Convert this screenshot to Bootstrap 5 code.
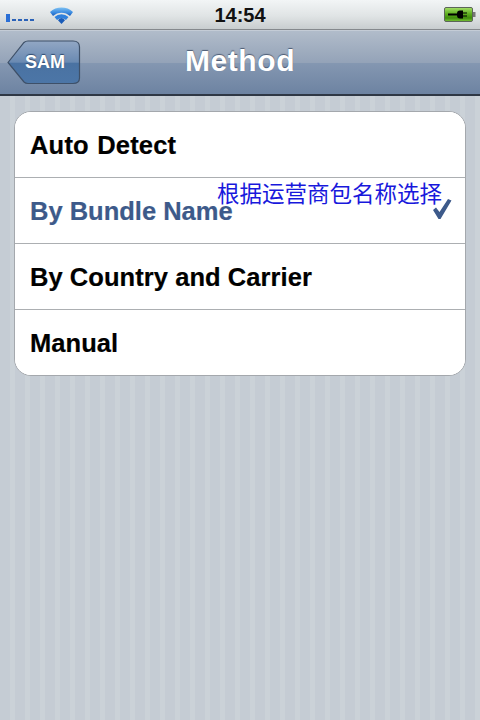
<!DOCTYPE html>
<html lang="en">
<head>
<meta charset="utf-8">
<title>Method</title>
<link href="https://cdn.jsdelivr.net/npm/bootstrap@5.3.0/dist/css/bootstrap.min.css" rel="stylesheet">
<style>
html,body{height:100%;}
body{width:480px;height:720px;overflow:hidden;font-family:"Liberation Sans",Arial,sans-serif;
 background:repeating-linear-gradient(90deg,#c5ccd4 0,#c5ccd4 10.5px,#cbd2d8 10.5px,#cbd2d8 15px);}
.status-strip{height:30px;background:linear-gradient(#f2f5f6,#e0e4e5 55%,#c8cdcf);border-bottom:1px solid #85898d;position:relative;}
.signal-ico{position:absolute;left:5px;top:14px;}
.wifi-ico{position:absolute;left:49px;top:5px;}
.clock-text{position:absolute;left:0;right:0;top:3px;text-align:center;font-size:20px;font-weight:700;color:#111;line-height:24px;}
.batt-ico{position:absolute;left:444px;top:6px;}
.title-bar{height:66px;border-top:1px solid #c4ccd6;border-bottom:2px solid #2f3845;position:relative;
 background:linear-gradient(#b1bcca 0,#94a3b8 50%,#8497b1 51%,#6d83a2 100%);}
.bar-title{position:absolute;left:0;right:0;top:12px;text-align:center;color:#fff;font-size:30px;font-weight:700;letter-spacing:.6px;line-height:36px;text-shadow:0 -1px 1px #4c5b73;}
.back-shape{position:absolute;left:7px;top:9px;}
.back-label{position:absolute;left:25px;top:19px;color:#fff;font-size:18px;font-weight:700;line-height:24px;text-shadow:0 -1px 1px #2e4a70;}
.group-box{margin:15px 14px 0 14px;width:452px;background:#fff;border:1px solid #a4a8ad;border-radius:17px;overflow:hidden;}
.row-item{height:66px;border-bottom:1px solid #acafb2;padding:2px 15px 0;font-size:25.5px;font-weight:700;color:#000;position:relative;background:#fff;letter-spacing:.06px;-webkit-text-stroke:.2px currentColor;}
.row-item:last-child{border-bottom:0;height:65px;}
.row-item.is-picked{color:#3d5a8a;letter-spacing:0;}
.auto-row{word-spacing:1px;letter-spacing:.2px;}
.note-text{position:absolute;left:202px;top:2px;font-family:"Liberation Sans","Noto Sans CJK SC",sans-serif;font-size:22.5px;font-weight:400;color:#1818dc;line-height:30px;white-space:nowrap;-webkit-text-stroke:0;}
.tick-ico{position:absolute;left:416px;top:19px;}
</style>
</head>
<body>
<div class="status-strip">
 <svg class="signal-ico" width="32" height="9" viewBox="0 0 32 9"><rect x="1" y="0" width="4" height="8" fill="#2a6fd6"/><rect x="7" y="5" width="4" height="2" fill="#2a62b8"/><rect x="13" y="5" width="4" height="2" fill="#2a62b8"/><rect x="19" y="5" width="4" height="2" fill="#2a62b8"/><rect x="25" y="5" width="4" height="2" fill="#2a62b8"/></svg>
 <svg class="wifi-ico" width="26" height="19" viewBox="0 0 26 19"><defs><linearGradient id="wf" x1="0" y1="0" x2="0" y2="1"><stop offset="0" stop-color="#7cc0f2"/><stop offset=".6" stop-color="#3a8ae0"/><stop offset="1" stop-color="#1a5cb8"/></linearGradient></defs><path d="M1 7 A17 17 0 0 1 24 7 L21 11 A12.5 12.5 0 0 0 4 11 Z" fill="url(#wf)"/><path d="M5.5 12 A10.5 10.5 0 0 1 19.5 12 L17 15 A6.5 6.5 0 0 0 8 15 Z" fill="#2f80dc"/><path d="M12.5 13 A5.5 5.5 0 0 1 16 15.2 L12.5 19 L9 15.2 A5.5 5.5 0 0 1 12.5 13 Z" fill="#1a5cb8"/></svg>
 <div class="clock-text">14:54</div>
 <svg class="batt-ico" width="32" height="17" viewBox="0 0 32 17"><defs><linearGradient id="bt" x1="0" y1="0" x2="0" y2="1"><stop offset="0" stop-color="#a6e06a"/><stop offset=".45" stop-color="#5fae20"/><stop offset=".75" stop-color="#3f8c0c"/><stop offset="1" stop-color="#7cc63a"/></linearGradient></defs><rect x=".5" y="1.5" width="28" height="14" rx="1.5" fill="url(#bt)" stroke="#5c665a"/><rect x="29" y="6" width="2.5" height="5" fill="#777"/><path d="M4 7.5H13C13 5.5 14 4.5 16 4.5H19V6.5H23V7.5H19V9.5H23V10.5H19V12.5H16C14 12.5 13 11.5 13 9.5H4Z" fill="#000"/></svg>
</div>
<div class="title-bar">
 <svg class="back-shape" width="74" height="46" viewBox="0 0 74 46"><defs><linearGradient id="bk" x1="0" y1="0" x2="0" y2="1"><stop offset="0" stop-color="#92a7c4"/><stop offset=".5" stop-color="#6a8ab2"/><stop offset=".52" stop-color="#4a72a2"/><stop offset="1" stop-color="#4c76a7"/></linearGradient></defs><path d="M1 22.5 L17 2.5 Q18.5 1 21 1 H66 Q72.5 1 72.5 7 V38 Q72.5 43.5 66 43.5 H21 Q18.5 43.5 17 42 Z" fill="url(#bk)" stroke="#3e5068" stroke-width="1.2"/></svg>
 <div class="back-label">SAM</div>
 <div class="bar-title">Method</div>
</div>
<div class="group-box">
 <div class="row-item auto-row d-flex align-items-center">Auto Detect</div>
 <div class="row-item is-picked d-flex align-items-center">By Bundle Name
  <span class="note-text">根据运营商包名称选择</span>
  <svg class="tick-ico" width="22" height="24" viewBox="0 0 22 24"><path d="M2 13 L5 10.5 L8.5 15 L17 2 L20.5 3.5 L9.5 22 H7.5 Z" fill="#3d5a8a"/></svg>
 </div>
 <div class="row-item d-flex align-items-center">By Country and Carrier</div>
 <div class="row-item d-flex align-items-center">Manual</div>
</div>
<script src="https://cdn.jsdelivr.net/npm/bootstrap@5.3.0/dist/js/bootstrap.bundle.min.js"></script>
</body>
</html>
